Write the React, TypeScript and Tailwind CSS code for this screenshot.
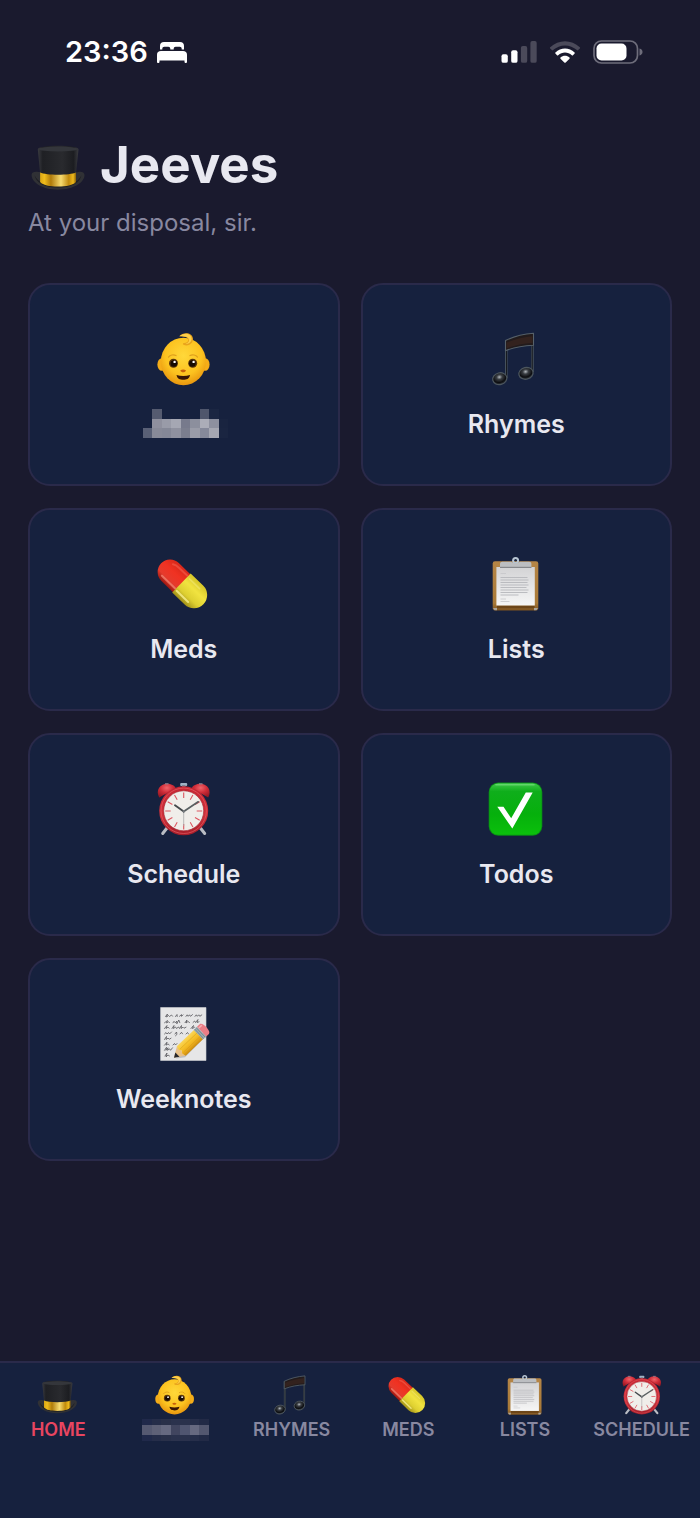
import type { ReactNode } from "react";

type IconProps = { className: string };

function Emoji({ className, children }: { className: string; children: ReactNode }) {
  return (
    <svg viewBox="1 0 54 54" className={`overflow-visible ${className}`} aria-hidden="true">
      {children}
    </svg>
  );
}

function Gradients() {
  return (
    <svg className="absolute h-0 w-0" aria-hidden="true">
      <defs>
        <linearGradient id="gold" x1="0" x2="1" y1="0" y2="0">
          <stop offset="0" stopColor="#d9a514" />
          <stop offset="0.12" stopColor="#f0bd1c" />
          <stop offset="0.3" stopColor="#b07c0a" />
          <stop offset="0.58" stopColor="#f7dc70" />
          <stop offset="0.8" stopColor="#c08a0c" />
          <stop offset="0.92" stopColor="#edb91c" />
          <stop offset="1" stopColor="#8a6208" />
        </linearGradient>
        <linearGradient id="crown" x1="0" x2="1" y1="0" y2="0">
          <stop offset="0" stopColor="#3a3b40" />
          <stop offset="0.12" stopColor="#1f2024" />
          <stop offset="0.6" stopColor="#292a2e" />
          <stop offset="0.88" stopColor="#1c1d21" />
          <stop offset="1" stopColor="#3a3b40" />
        </linearGradient>
        <radialGradient id="skin" cx="0.5" cy="0.38" r="0.62">
          <stop offset="0" stopColor="#ffd83a" />
          <stop offset="0.65" stopColor="#fcc21f" />
          <stop offset="1" stopColor="#e8960f" />
        </radialGradient>
        <radialGradient id="noteHead" cx="0.5" cy="0.36" r="0.65">
          <stop offset="0" stopColor="#b4b9be" />
          <stop offset="0.3" stopColor="#3a3e43" />
          <stop offset="0.7" stopColor="#0c0d10" />
          <stop offset="1" stopColor="#3b434a" />
        </radialGradient>
        <linearGradient id="pillRed" x1="0" x2="0" y1="0" y2="1">
          <stop offset="0" stopColor="#d8281a" />
          <stop offset="0.4" stopColor="#f03222" />
          <stop offset="0.75" stopColor="#e63a2c" />
          <stop offset="1" stopColor="#9c1710" />
        </linearGradient>
        <linearGradient id="pillYellow" x1="0" x2="0" y1="0" y2="1">
          <stop offset="0" stopColor="#d6c628" />
          <stop offset="0.35" stopColor="#f1e340" />
          <stop offset="0.7" stopColor="#ded031" />
          <stop offset="1" stopColor="#a39218" />
        </linearGradient>
        <linearGradient id="board" x1="0" x2="0" y1="0" y2="1">
          <stop offset="0" stopColor="#b58546" />
          <stop offset="0.85" stopColor="#a97a38" />
          <stop offset="1" stopColor="#7d5320" />
        </linearGradient>
        <linearGradient id="sheet" x1="0" x2="0" y1="0" y2="1">
          <stop offset="0" stopColor="#d3d3d5" />
          <stop offset="1" stopColor="#f6f6f6" />
        </linearGradient>
        <radialGradient id="bell" cx="0.5" cy="0.3" r="0.7">
          <stop offset="0" stopColor="#f0656a" />
          <stop offset="0.5" stopColor="#cf2c38" />
          <stop offset="1" stopColor="#981924" />
        </radialGradient>
        <linearGradient id="clockRim" x1="0" x2="0" y1="0" y2="1">
          <stop offset="0" stopColor="#c62633" />
          <stop offset="0.6" stopColor="#d0303b" />
          <stop offset="1" stopColor="#a41c28" />
        </linearGradient>
        <linearGradient id="green" x1="0" x2="0" y1="0" y2="1">
          <stop offset="0" stopColor="#3fc94a" />
          <stop offset="0.16" stopColor="#0fae1b" />
          <stop offset="0.6" stopColor="#06b00c" />
          <stop offset="1" stopColor="#0bc00c" />
        </linearGradient>
        <linearGradient id="pencil" x1="0" x2="0" y1="0" y2="1">
          <stop offset="0" stopColor="#f9d65c" />
          <stop offset="0.35" stopColor="#f8c62f" />
          <stop offset="0.7" stopColor="#eeb01c" />
          <stop offset="1" stopColor="#c98a10" />
        </linearGradient>
      </defs>
    </svg>
  );
}

function HatIcon({ className }: IconProps) {
  return (
    <Emoji className={className}>
      <path d="M.6 36.5c.4-2.400 3-3.400 7-2.500l39 .2c4-1 6.600.2 6.900 2.600C54 44 43 51.700 27 51.700S0 44 .6 36.500z" fill="#303135" />
      <path d="M3.500 37.200C7 44 15 48.500 27 48.500s20-4.500 23.500-11.300C49 44.500 41 49.500 27 49.500S5 44.500 3.500 37.200z" fill="#1d1e21" />
      <path d="M6.800 11.500c0-2.600 9-3.700 20.300-3.700s20.400 1.100 20.400 3.700L44.800 37v6c-3 3.400-9.500 4.800-17.800 4.800S12 46.400 9.300 43v-6z" fill="url(#crown)" />
      <ellipse cx="27.100" cy="11" rx="19.600" ry="2.500" fill="#34363b" />
      <path d="M9.100 34.500c3.300 1.500 10 2.200 17.900 2.200s14.700-.7 18-2.200V44c-3 3.300-9.500 4.500-18 4.500S12 47.300 9.100 44z" fill="url(#gold)" />
    </Emoji>
  );
}

function BabyIcon({ className }: IconProps) {
  return (
    <Emoji className={className}>
      <ellipse cx="5.800" cy="32.500" rx="4.400" ry="6.300" fill="#f5ad18" />
      <ellipse cx="49.200" cy="32.500" rx="4.400" ry="6.300" fill="#f5ad18" />
      <ellipse cx="27.400" cy="29.500" rx="22.600" ry="23.700" fill="url(#skin)" />
      <path d="M23.200 4.200C27.500-.6 36.700.3 37 7c.1 4.700-5 7.900-9.500 5.700-1-.5-.6-1.800.4-1.700 2.600.1 4.500-1.300 4.400-3.400-.2-2.600-4-3.400-9.100-3.400z" fill="#e9a41c" />
      <path d="M23.500 4.200C27.500.2 35.200.8 35.600 6.500c.2 3.300-3 5.900-6.200 5.300 2.500-.7 3.800-2.100 3.700-4.100-.2-2.700-4.200-3.700-9.600-3.500z" fill="#fdd04a" />
      <path d="M12.500 25.200c1.500-2.300 5-3 7.500-1.600M34 23.600c2.500-1.400 6-.7 7.500 1.600" fill="none" stroke="#dfa01c" strokeWidth="1.200" strokeLinecap="round" />
      <circle cx="17.500" cy="31.300" r="4.500" fill="#5a360c" />
      <circle cx="36.700" cy="31.300" r="4.500" fill="#5a360c" />
      <circle cx="17.800" cy="31.500" r="3.300" fill="#170b03" />
      <circle cx="36.400" cy="31.500" r="3.300" fill="#170b03" />
      <circle cx="18.600" cy="29.900" r="1.200" fill="#fff" />
      <circle cx="37.600" cy="29.900" r="1.200" fill="#fff" />
      <path d="M24.300 38.400c1.700-1.200 4-1.200 5.700 0-.7 2.400-5 2.400-5.700 0z" fill="#c9600b" />
      <path d="M20.500 43c4.200 1.200 9.300 1.200 13.600 0-.9 4-3.600 4.800-6.800 4.800s-6-.8-6.800-4.800z" fill="#381504" />
    </Emoji>
  );
}

function MusicIcon({ className }: IconProps) {
  return (
    <Emoji className={className}>
      <path d="M18.300 8.500V46M44.400 2v38" stroke="#4f5b65" strokeWidth="2.500" />
      <path d="M18.500 16.500V46M44.200 12v28" stroke="#171a20" strokeWidth="1.200" />
      <path d="M17.500 8.500c8-4 18-6.500 28-7.300v12c-10 .5-19 2-28 5.500z" fill="#221b1c" stroke="#56616a" strokeWidth="1.100" strokeLinejoin="round" />
      <path d="M18.600 10.500c8-3.300 17-5.500 25.800-6.300V11c-9 .6-17.500 2.300-25.800 5.300z" fill="#33221e" />
      <ellipse cx="11.800" cy="46.700" rx="7.200" ry="5.900" transform="rotate(-14 11.800 46.700)" fill="url(#noteHead)" stroke="#4c565e" strokeWidth="1.200" />
      <ellipse cx="38" cy="41.300" rx="7.200" ry="5.900" transform="rotate(-14 38 41.300)" fill="url(#noteHead)" stroke="#4c565e" strokeWidth="1.200" />
    </Emoji>
  );
}

function PillIcon({ className }: IconProps) {
  return (
    <Emoji className={className}>
      <g transform="rotate(44 26.500 27)">
        <path d="M26 14.500H9.300a12.500 12.500 0 0 0 0 25H26z" fill="url(#pillRed)" />
        <path d="M25 13.700h17.300a13.300 13.300 0 0 1 0 26.600H25z" fill="url(#pillYellow)" />
        <path d="M6 19.500c2-1.500 4-1.800 7-1.800h11" fill="none" stroke="#ff7767" strokeWidth="2" strokeLinecap="round" opacity=".4" />
        <path d="M6 35.300h18" stroke="#ff9a88" strokeWidth="2.200" strokeLinecap="round" opacity=".6" />
        <path d="M27 36h16" stroke="#fff9a0" strokeWidth="2" strokeLinecap="round" opacity=".7" />
        <path d="M28 18.500h14" stroke="#fffbb0" strokeWidth="1.600" strokeLinecap="round" opacity=".3" />
      </g>
    </Emoji>
  );
}

function ClipboardIcon({ className }: IconProps) {
  return (
    <Emoji className={className}>
      <rect x="4.700" y="4.300" width="45.600" height="49.200" rx="2.300" fill="url(#board)" />
      <path d="M9 48.500h37.500v2.800H9z" fill="#6d4618" />
      <path d="M8.400 10h38.400v38.500H8.400z" fill="url(#sheet)" />
      <path d="M12.500 16.500h5.500M12.500 42h5.500M12.500 44.500h9" stroke="#c6c6c9" strokeWidth=".8" />
      <path d="M12.500 20.500h27M12.500 23h28M12.500 25.500h27M12.500 28h28M12.500 30.500h26M12.500 33h28M12.500 35.500h27M12.500 38h18" stroke="#b6b7bb" strokeWidth=".9" />
      <path d="M5 51h4v2.300H6.500zM46 51h4l-1.500 2.300H46z" fill="#a9a49c" />
      <circle cx="27.600" cy="3.600" r="2.500" fill="none" stroke="#b7c5d2" strokeWidth="2" />
      <path d="M12 10.800V7c0-1.400 1-2.200 2.300-2.200h9c1.200 1.700 7.200 1.700 8.500 0h9.300c1.400 0 2.300.8 2.300 2.200v3.800z" fill="#bcbec1" />
      <path d="M12 9.800h31.400v1.200H12z" fill="#85878b" />
    </Emoji>
  );
}

function ClockIcon({ className }: IconProps) {
  return (
    <Emoji className={className}>
      <path d="m11 46-4.300 5.500M44.400 46l4.300 5.500" stroke="#b9bcc3" strokeWidth="3" strokeLinecap="round" />
      <rect x="24.200" y="1" width="7" height="3" rx="1" fill="#9fb2c4" />
      <path d="M26 3h3.500v4H26z" fill="#7d8794" />
      <path d="M3.200 15.500C-.8 8.500 4 2 11 1.800c4 0 7.500 1.800 8.800 4.400z" fill="url(#bell)" />
      <path d="M52.200 15.500c4-7-.8-13.500-7.800-13.700-4 0-7.500 1.800-8.800 4.400z" fill="url(#bell)" />
      <path d="M9 1.800h3.500M43 1.800h3.500" stroke="#8f8290" strokeWidth="1.200" />
      <circle cx="27.700" cy="28.800" r="24.500" fill="url(#clockRim)" />
      <circle cx="27.700" cy="28.800" r="22.700" fill="none" stroke="#e45c62" strokeWidth="1" opacity=".7" />
      <circle cx="27.700" cy="28.800" r="20" fill="#f0eeea" stroke="#9d232d" strokeWidth=".6" />
      <path d="M27.700 10.500V16M27.700 42v5.500M9.200 29h5.500M40.700 29h5.500M18.500 13l2.700 4.700M34.200 40.300l2.700 4.700M11.700 38.300l4.700-2.700M39 22.400l4.700-2.700M11.700 19.700l4.700 2.700M39 35.600l4.700 2.700M18.500 45l2.700-4.700M34.200 17.700l2.700-4.700" stroke="#dc5660" strokeWidth="1.100" />
      <path d="M27.700 29v15" stroke="#a8a9aa" strokeWidth=".8" />
      <path d="M27.700 29.500 19 23.300" stroke="#44494c" strokeWidth="1.900" strokeLinecap="round" />
      <path d="m27.700 29.500 14.500-9.700" stroke="#596062" strokeWidth="1.700" strokeLinecap="round" />
      <circle cx="27.700" cy="29.300" r="1.200" fill="#777b7e" />
    </Emoji>
  );
}

function CheckIcon({ className }: IconProps) {
  return (
    <Emoji className={className}>
      <rect x=".7" y=".5" width="53.600" height="53.300" rx="9.500" fill="#098c16" />
      <rect x="1.500" y="1.200" width="52" height="51.600" rx="8.800" fill="url(#green)" />
      <path d="M8 2.700h38" stroke="#83e58a" strokeWidth="1.600" strokeLinecap="round" opacity=".55" />
      <path d="M9.300 24.800h6.200l7.700 11.500L37.800 10.500h6.900L24.300 46.500z" fill="#fff" />
    </Emoji>
  );
}

function MemoIcon({ className }: IconProps) {
  return (
    <Emoji className={className}>
      <path d="M4.600.5H50v53H4.600z" fill="#e6e6e7" stroke="#cfd0d3" strokeWidth=".6" />
      <g fill="none" stroke="#55555b" strokeWidth=".8" strokeLinecap="round" strokeLinejoin="round">
        <path d="M9.500 9.500l2-2.500-1 3 2-1.500 1 1 2-1.500 1 1.200M19.500 9.500l1.500-2 .2 2M23.500 9.300l2-1.700v1.800l1.500-1.500M30 9.400l1.200-1.600 1 1.500 1.300-1.500 1 1.500 2-1.700M39 9.400l1.300-1.600 1 1.500 1.500-1.500 1 1.500 2-1.400" />
        <path d="M8.500 15.800l3-2.300-1 2.500 2-1.300 1 1M17 15.800l1-1.500 1.300 1.500 1.500-1.700v2.700l2-3.800 1 2.700M29 15.700l2-2.700-1 3 2-1.500 1.500 1M37 15.500l1.500-1.500 1 1.500 2.500-3-1 3 2-.7" />
        <path d="M8.500 21.500l2.500-3-1 3 2-1.300 1.200 1M16 21.500l2-3-.5 3 2-1.500 1 1.500 2-1.500 1 1.500 2-3-.5 3 2-1.300 1 1 2-1M35 21.500l2.500-3-1 3 2-1.200" />
        <path d="M8.500 27l1.500-1.500 1 1.500 1.500-1.500 1 1.500 2-2M19 27l1.500-2 .5 2.300-1.500 1.500M24 27l1.500-1.700 1 1.500M30 27l1.500-1.500 1 1.500" />
        <path d="M8.500 32.500l2-3-.5 3 2-1.300 1.500 1 1.500-1M8.500 38.200l2.500-3-1 3 2-1.300 1.200 1M17 38l1.500-1.500 1 1.500 1.500-1.500M8.500 43.300l2-3-.5 3 2-2.500-.5 2.500 2-1.500 1 1.500 2-2.500M9 49l2-3-1 4 2-2 1.500 1" />
      </g>
      <path d="m20 51.500 9-1.200L53 26l-4-2z" fill="#7f8085" opacity=".4" />
      <g transform="translate(18 50.800) rotate(-43.500)">
        <path d="M0 0 10-6.300v12.600z" fill="#e9c187" />
        <path d="M0 0 4.700-3v6z" fill="#27272b" />
        <path d="M10-6.500 9-2.300l1.500 2.300L9 2.500l1 4h24v-13z" fill="url(#pencil)" />
        <path d="M10.500-2.200H34M10.500 2.500H34" stroke="#c98e16" strokeWidth=".6" opacity=".6" />
        <path d="M33.500-6.700h4.600V6.700h-4.600z" fill="#9aacb2" />
        <path d="M34.800-6.700V6.700M36.800-6.700V6.700" stroke="#65767d" strokeWidth=".6" />
        <path d="M38.100-6.700h3.700c3.700 0 3.700 13.400 0 13.400h-3.700z" fill="#ea7d86" />
        <path d="M38.500-4.500h4" stroke="#f6b1b5" strokeWidth="1.600" />
      </g>
    </Emoji>
  );
}

type Cell = [number, number, string];

const tileCells: Cell[] = [
  [1, 0, "#555b70"], [6, 0, "#4f566c"], [7, 0, "#1b2642"],
  [1, 1, "#8f909e"], [2, 1, "#999ba8"], [3, 1, "#a5a7b3"], [4, 1, "#777a8c"], [5, 1, "#8c8f9d"], [6, 1, "#abadb8"], [7, 1, "#8d909f"], [8, 1, "#192440"],
  [0, 2, "#596076"], [1, 2, "#888a98"], [2, 2, "#858897"], [3, 2, "#8f919f"], [4, 2, "#7b7e8e"], [5, 2, "#9a9ca8"], [6, 2, "#85899a"], [7, 2, "#a5a7b2"], [8, 2, "#1a2541"],
];

function BlurredTileName() {
  return (
    <svg viewBox="0 0 90 30" className="h-[30px] w-[90px]" role="img" aria-label="Private name" shapeRendering="crispEdges">
      {tileCells.map(([col, row, fill]) => (
        <rect key={`${col}-${row}`} x={col * 9.5 + 3.5} y={row * 9.6} width="9.600" height="9.700" fill={fill} />
      ))}
    </svg>
  );
}

const navColours = ["#555971", "#5e6177", "#666980", "#41455f", "#505570", "#666980", "#53576f"];
const navShades = ["#20294a", "#252d49", "#293049", "#2b324d", "#2a314c", "#262e4a", "#222a46"];

function BlurredNavName() {
  return (
    <svg viewBox="0 0 68 22" className="h-[22px] w-[68px]" role="img" aria-label="Private name" shapeRendering="crispEdges">
      {navColours.map((fill, i) => (
        <g key={i}>
          <rect x={i * 9.5 + 1} y="0" width="9.600" height="22" fill={navShades[i]} />
          <rect x={i * 9.5 + 1} y="6" width="9.600" height="10" fill={fill} />
        </g>
      ))}
    </svg>
  );
}

function BedIcon() {
  return (
    <svg viewBox="0 0 30 21" className="h-[21px] w-[30px]" fill="#fff" aria-label="Sleep focus" role="img">
      <path d="M3 7.500V4c0-2.600 1.400-4 4-4h16c2.600 0 4 1.400 4 4v3.500h-2.300V6.800c0-1.200-.8-2-2-2h-4c-1.200 0-2 .8-2 2v.7h-3.400v-.7c0-1.200-.8-2-2-2h-4c-1.200 0-2 .8-2 2v.7z" />
      <path d="M0 12.700C0 10.200 1.500 9 4 9h22c2.500 0 4 1.200 4 3.700v7c0 .8-.5 1.300-1.200 1.300s-1.300-.5-1.300-1.300v-1.200h-25v1.200c0 .8-.5 1.300-1.300 1.300S0 20.500 0 19.700z" />
    </svg>
  );
}

function StatusIcons() {
  return (
    <div className="flex items-center gap-3">
      <svg viewBox="0 0 36 22" className="h-[22px] w-9" role="img" aria-label="Signal">
        <rect x=".5" y="13.300" width="6.300" height="8.500" rx="1.900" fill="#fff" />
        <rect x="10.200" y="9.300" width="6.300" height="12.500" rx="1.900" fill="#fff" />
        <rect x="19.900" y="5" width="6.300" height="16.800" rx="1.900" fill="#4b4a5a" />
        <rect x="29.400" y="0" width="6.300" height="21.800" rx="1.900" fill="#4b4a5a" />
      </svg>
      <svg viewBox="0 0 32 22" className="h-[22px] w-8" role="img" aria-label="Wi-Fi">
        <path d="M1.200 6.300C9.500-1.800 22.500-1.800 30.800 6.300c.4.400.4.800 0 1.200l-1.600 1.600c-.4.400-.9.400-1.300 0-6.600-6.300-17.200-6.300-23.800 0-.4.400-.9.400-1.300 0L1.200 7.500c-.4-.4-.4-.8 0-1.200z" fill="#4b4a5a" />
        <path d="M6.400 11.400c5.400-5.200 13.800-5.200 19.200 0 .4.400.4.800 0 1.200L24 14.200c-.4.400-.8.400-1.200 0-3.800-3.600-9.800-3.600-13.600 0-.4.400-.8.400-1.200 0l-1.600-1.600c-.4-.4-.4-.8 0-1.200z" fill="#fff" />
        <path d="M11.500 16.500c2.500-2.300 6.500-2.300 9 0 .4.400.4.800 0 1.200l-3.800 3.700c-.4.400-1 .4-1.400 0l-3.800-3.700c-.4-.4-.4-.8 0-1.200z" fill="#fff" />
      </svg>
      <svg viewBox="0 0 50 24" className="h-6 w-[50px]" role="img" aria-label="Battery">
        <rect x="1" y="1" width="43.500" height="22" rx="7.500" fill="none" stroke="#6e6d7b" strokeWidth="1.700" />
        <rect x="3.500" y="3.500" width="30" height="17" rx="5" fill="#fff" />
        <path d="M46.500 8.500c2 .6 3 1.900 3 3.500s-1 2.900-3 3.500z" fill="#6e6d7b" />
      </svg>
    </div>
  );
}

type Section = { id: string; label: string | null; Icon: (p: IconProps) => ReactNode };

const tiles: Section[] = [
  { id: "baby", label: null, Icon: BabyIcon },
  { id: "rhymes", label: "Rhymes", Icon: MusicIcon },
  { id: "meds", label: "Meds", Icon: PillIcon },
  { id: "lists", label: "Lists", Icon: ClipboardIcon },
  { id: "schedule", label: "Schedule", Icon: ClockIcon },
  { id: "todos", label: "Todos", Icon: CheckIcon },
  { id: "weeknotes", label: "Weeknotes", Icon: MemoIcon },
];

const tabs: Section[] = [{ id: "home", label: "Home", Icon: HatIcon }, ...tiles.slice(0, 5)];

export default function App() {
  return (
    <div className="flex min-h-screen flex-col bg-[#1a1a2e] font-['Inter','Liberation_Sans',sans-serif] text-[#e8e8f0]">
      <Gradients />
      <div className="flex h-[104px] items-center justify-between pr-[57px] pl-[65px]">
        <div className="flex items-center gap-[9px]">
          <span className="text-[29px] leading-9 font-semibold text-white">23:36</span>
          <BedIcon />
        </div>
        <StatusIcons />
      </div>

      <main className="flex-1 px-7 pt-[29px]">
        <header>
          <h1 className="flex h-16 items-center gap-3.5 pl-1 text-[51px] leading-[64px] font-bold">
            <HatIcon className="size-[54px]" />
            Jeeves
          </h1>
          <p className="mt-2.5 text-[24px] leading-8 text-[#8888a0]">At your disposal, sir.</p>
        </header>

        <div className="mt-11 grid grid-cols-2 gap-x-[21px] gap-y-[22px]">
          {tiles.map(({ id, label, Icon }) => (
            <a
              key={id}
              href={`#${id}`}
              className="flex h-[203px] flex-col items-center gap-[22px] rounded-[22px] border-2 border-[#2a2a4a] bg-[#16213e] pt-[47px]"
            >
              <Icon className="size-[54px]" />
              <span className="flex h-8 items-center text-[25px] leading-8 font-semibold">
                {label ?? <BlurredTileName />}
              </span>
            </a>
          ))}
        </div>
      </main>

      <nav className="grid h-[157px] grid-cols-6 border-t-2 border-[#2a2a4a] bg-[#16213e] pt-3">
        {tabs.map(({ id, label, Icon }) => (
          <a
            key={id}
            href={`#${id}`}
            aria-current={id === "home" ? "page" : undefined}
            className={`flex flex-col items-center gap-[3px] text-[18px] leading-6 font-semibold uppercase ${
              id === "home" ? "text-[#e94560]" : "text-[#8888a0]"
            }`}
          >
            <Icon className="size-10" />
            <span className="flex h-6 items-center">{label ?? <BlurredNavName />}</span>
          </a>
        ))}
      </nav>
    </div>
  );
}
